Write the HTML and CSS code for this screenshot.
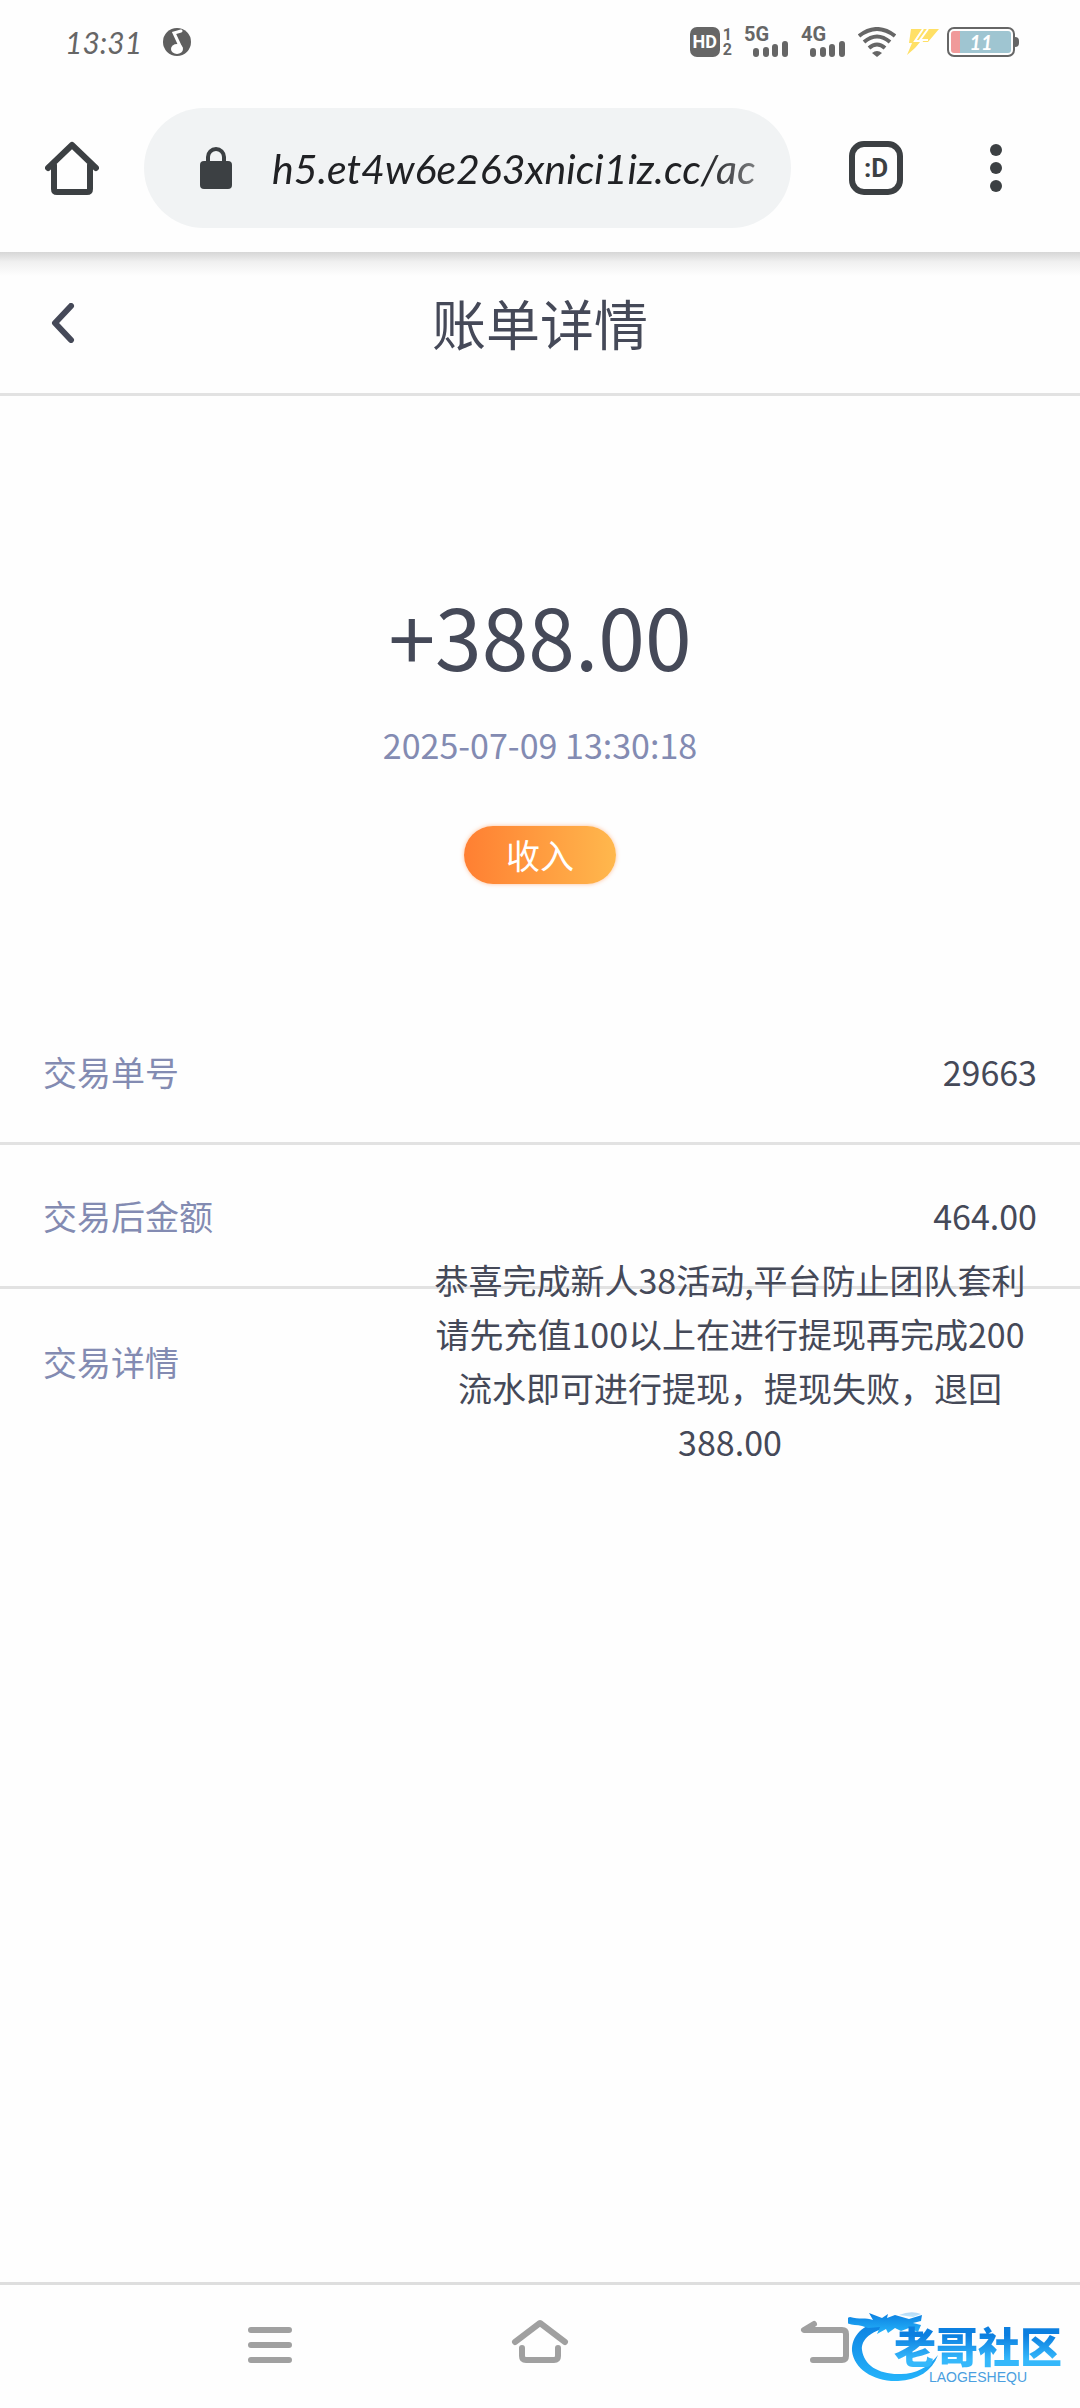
FILE: index.html
```html
<!DOCTYPE html>
<html lang="zh-CN">
<head>
    <meta charset="UTF-8">
    <meta name="viewport" content="width=device-width, initial-scale=1.0">
    <title>账单详情</title>
    <link rel="stylesheet" href="styles.css">
</head>
<body>
    <!-- Phone status bar -->
    <div class="status-bar">
        <div class="status-left">
            <span class="time">13:31</span>
            <svg width="28" height="28" viewBox="0 0 28 28">
                <circle cx="14" cy="14" r="14" fill="#5f5f5f"/>
                <path d="M18 3l-7 2 7 15" fill="none" stroke="#fff" stroke-width="3" stroke-linecap="round"/>
                <ellipse cx="14" cy="21" rx="6" ry="5" fill="#fff"/>
            </svg>
        </div>
        <div class="status-right">
            <div class="hd">
                <span class="hd-box">HD</span>
                <span class="hd-sims"><span>1</span><span>2</span></span>
            </div>
            <div class="signal">
                <span>5G</span>
                <svg width="36" height="16" viewBox="0 0 36 16">
                    <path d="M3 10v3M13 9v4M22 6v7M32 3v10" stroke="#666" stroke-width="6" stroke-linecap="round"/>
                </svg>
            </div>
            <div class="signal">
                <span>4G</span>
                <svg width="36" height="16" viewBox="0 0 36 16">
                    <path d="M3 10v3M13 9v4M22 6v7M32 3v10" stroke="#666" stroke-width="6" stroke-linecap="round"/>
                </svg>
            </div>
            <svg class="wifi" width="38" height="30" viewBox="0 0 38 30">
                <path d="M1 9Q19-5 37 9M6 15Q19 4 32 15M11 21Q19 14 27 21" fill="none" stroke="#666" stroke-width="4"/>
                <path d="M14 26q5-4 10 0l-5 4z" fill="#666"/>
            </svg>
            <svg class="bolt" width="34" height="28" viewBox="0 0 34 28">
                <path d="M5 1h28L22 14h-6L1 27l5-12H3z" fill="#ffe066"/>
                <path d="M17 1L9 13h7L8 23M22 1l-8 11h8" fill="none" stroke="#fff" stroke-width="2"/>
            </svg>
            <div class="battery"><span>11</span></div>
        </div>
    </div>

    <!-- Browser toolbar -->
    <div class="toolbar">
        <button class="icon-button" aria-label="主页">
            <svg width="54" height="54" viewBox="0 0 54 54">
                <path d="M9 24v24q0 3 3 3h30q3 0 3-3V24M3 27L27 4l24 23" fill="none" stroke="#3c4043" stroke-width="6" stroke-linecap="round" stroke-linejoin="round"/>
            </svg>
        </button>
        <div class="address">
            <svg width="32" height="42" viewBox="0 0 32 42">
                <rect y="14" width="32" height="28" rx="4" fill="#3c4043"/>
                <path d="M8 16v-6a8 8 0 0 1 16 0v6" fill="none" stroke="#3c4043" stroke-width="4"/>
            </svg>
            <input class="url" type="text" aria-label="网址" value="h5.et4w6e263xnici1iz.cc/ac">
        </div>
        <button class="tabs-button" aria-label="标签页">:D</button>
        <button class="icon-button" aria-label="菜单">
            <svg width="12" height="48" viewBox="0 0 12 48" fill="#3c4043">
                <circle cx="6" cy="6" r="6"/>
                <circle cx="6" cy="24" r="6"/>
                <circle cx="6" cy="42" r="6"/>
            </svg>
        </button>
    </div>

    <header class="header">
        <button class="icon-button" aria-label="返回">
            <svg width="24" height="40" viewBox="0 0 24 40">
                <path d="M20 3L4 20l16 17" fill="none" stroke="#454958" stroke-width="6" stroke-linecap="round" stroke-linejoin="round"/>
            </svg>
        </button>
        <h1>账单详情</h1>
    </header>

    <main>
        <div class="summary">
            <div class="amount">+388.00</div>
            <div class="date">2025-07-09 13:30:18</div>
            <div class="tag">收入</div>
        </div>

        <dl class="details">
            <div class="row">
                <dt>交易单号</dt>
                <dd>29663</dd>
            </div>
            <div class="row">
                <dt>交易后金额</dt>
                <dd>464.00</dd>
            </div>
            <div class="row">
                <dt>交易详情</dt>
                <dd class="note">恭喜完成新人38活动,平台防止团队套利请先充值100以上在进行提现再完成200流水即可进行提现，提现失败，退回388.00</dd>
            </div>
        </dl>
    </main>

    <!-- System navigation -->
    <nav class="nav-bar">
        <button class="icon-button" aria-label="最近任务">
            <svg width="80" height="60" viewBox="0 0 80 60">
                <path d="M21 13h38M21 28h38M21 43h38"/>
            </svg>
        </button>
        <button class="icon-button" aria-label="主屏幕">
            <svg width="80" height="60" viewBox="0 0 80 60">
                <path d="M15 25L40 6l25 19M22 31v8q0 4 4 4h28q4 0 4-4v-8"/>
            </svg>
        </button>
        <button class="icon-button" aria-label="返回上一页">
            <svg width="80" height="60" viewBox="0 0 80 60">
                <path d="M44 7l-10 6h38q4 0 4 4v22q0 4-4 4H43"/>
            </svg>
        </button>
        <div class="watermark">
            <svg width="92" height="80" viewBox="0 0 92 80">
                <defs>
                    <linearGradient id="dragon" x1="0" y1="0" x2="0" y2="1">
                        <stop offset="0" stop-color="#0c7fe0"/>
                        <stop offset="1" stop-color="#25b4fb"/>
                    </linearGradient>
                </defs>
                <g fill="url(#dragon)">
                    <path d="M37 16C14 18 3 32 4 46c2 18 22 31 46 30 20-1 34-10 40-26-10 13-24 20-40 19-20 0-34-9-36-24-1-11 10-19 24-22z"/>
                    <path d="M2 12c9 3 16 0 23 3l-4-7 13 5 6-4-1 4 8-3 14 4 13-4-1 6-8 2 8 2-3 7-9-4-8 3-6-3-7 5-2-4-9 5 3-7-12 1-6-2c-7-2-13 0-19-6z"/>
                    <path d="M51 10q12-5 22-1l-8 3z" opacity=".3"/>
                </g>
            </svg>
            <div class="watermark-text">
                <strong>老哥社区</strong>
                <small>LAOGESHEQU</small>
            </div>
        </div>
    </nav>
</body>
</html>
```
FILE: styles.css
```css
* {
    margin: 0;
    padding: 0;
    box-sizing: border-box;
}

body {
    display: flex;
    flex-direction: column;
    min-height: 100vh;
    background: #fefefe;
    color: #454958;
    font-family: 'Noto Sans CJK SC', sans-serif;
    font-size: 34px;
}

button {
    border: none;
    background: none;
    color: inherit;
    cursor: pointer;
}

svg {
    display: block;
    flex-shrink: 0;
}

.icon-button {
    display: flex;
    align-items: center;
    justify-content: center;
}

/* Status bar */
.status-bar {
    display: flex;
    justify-content: space-between;
    align-items: center;
    height: 84px;
    padding: 0 65px 0 65px;
    color: #666;
}

.status-left,
.status-right {
    display: flex;
    align-items: center;
}

.status-left {
    gap: 21px;
}

.time {
    font-family: Lato, sans-serif;
    font-size: 30px;
    font-style: italic;
}

.status-right {
    gap: 12px;
    font-family: Roboto, sans-serif;
    font-weight: bold;
}

.hd {
    display: flex;
    gap: 3px;
}

.hd-box {
    width: 30px;
    border-radius: 7px;
    background: #666;
    color: #fff;
    font-size: 18px;
    line-height: 30px;
    text-align: center;
}

.hd-sims {
    display: flex;
    flex-direction: column;
    font-size: 16px;
    line-height: 15px;
}

.signal {
    display: flex;
    flex-direction: column;
    width: 45px;
    font-size: 20px;
    line-height: 14px;
}

.signal svg {
    align-self: flex-end;
}

.bolt {
    margin: 0 -5px 0 -2px;
}

.battery {
    position: relative;
    width: 68px;
    height: 30px;
    padding: 2px;
    border: 2px solid #666;
    border-radius: 7px;
    background: linear-gradient(90deg, #f09a9a 9px, #9fc5d1 9px) content-box;
    color: #fff;
    font-family: Lato, sans-serif;
    font-size: 20px;
    font-style: italic;
    line-height: 22px;
    text-align: center;
}

.battery::after {
    content: '';
    position: absolute;
    top: 8px;
    right: -6px;
    width: 4px;
    height: 10px;
    border-radius: 0 4px 4px 0;
    background: #666;
}

/* Browser toolbar */
.toolbar {
    display: flex;
    align-items: center;
    height: 168px;
    padding: 0 78px 0 45px;
}

.address {
    display: flex;
    flex: 1;
    align-items: center;
    gap: 40px;
    min-width: 0;
    height: 120px;
    margin: 0 58px 0 45px;
    padding: 0 28px 0 56px;
    border-radius: 60px;
    background: #f1f3f4;
}

.url {
    flex: 1;
    min-width: 0;
    border: none;
    outline: none;
    background: none;
    color: #202124;
    font-family: Lato, sans-serif;
    font-size: 41px;
    font-style: italic;
    -webkit-mask-image: linear-gradient(90deg, #000 88%, rgba(0, 0, 0, 0.5));
    mask-image: linear-gradient(90deg, #000 88%, rgba(0, 0, 0, 0.5));
}

.tabs-button {
    width: 54px;
    height: 54px;
    margin-right: 87px;
    border: 6px solid #3c4043;
    border-radius: 15px;
    color: #3c4043;
    font-family: Roboto, sans-serif;
    font-size: 26px;
    font-weight: bold;
}

/* Page header, shaded by the toolbar above it */
.header {
    display: grid;
    grid-template-columns: 1fr auto 1fr;
    align-items: center;
    height: 144px;
    padding: 0 51px;
    border-bottom: 3px solid #e2e2e2;
    background: linear-gradient(#d6d6d6, #f0f0f0 10px, #fefefe 24px);
}

.header .icon-button {
    justify-self: start;
}

h1 {
    font-size: 54px;
    font-weight: normal;
    line-height: 80px;
}

main {
    flex: 1;
}

.summary {
    display: flex;
    flex-direction: column;
    align-items: center;
    padding: 179px 0 117px;
}

.amount {
    font-size: 84px;
    line-height: 120px;
}

.date {
    margin: 26px 0 57px;
    color: #838bb2;
    line-height: 48px;
}

.tag {
    width: 152px;
    border-radius: 29px;
    background: linear-gradient(90deg, #ff7f32, #ffb84d);
    box-shadow: 0 0 4px rgba(255, 127, 50, 0.5);
    color: #fff;
    line-height: 58px;
    text-align: center;
}

/* Bill rows */
.row {
    display: flex;
    justify-content: space-between;
    align-items: center;
    height: 144px;
    padding: 0 43px;
    border-bottom: 3px solid #e2e2e2;
}

.row:last-child {
    border-bottom: none;
}

dt {
    color: #838bb2;
}

.note {
    width: 614px;
    line-height: 54px;
    text-align: center;
}

/* System navigation */
.nav-bar {
    position: relative;
    display: grid;
    grid-template-columns: repeat(3, 1fr);
    height: 126px;
    padding: 0 12.5%;
    border-top: 3px solid #dedede;
}

.nav-bar .icon-button path {
    fill: none;
    stroke: #a0a0a0;
    stroke-width: 6;
    stroke-linecap: round;
    stroke-linejoin: round;
}

.watermark {
    position: absolute;
    right: 18px;
    bottom: 23px;
    display: flex;
    align-items: flex-end;
}

.watermark-text {
    display: flex;
    flex-direction: column;
    align-items: center;
    margin-left: -46px;
}

.watermark strong {
    background: linear-gradient(#0c7fe0 30%, #35b8fb 80%);
    -webkit-background-clip: text;
    background-clip: text;
    color: transparent;
    font-size: 42px;
    font-weight: 900;
    line-height: 48px;
}

.watermark small {
    color: #4a9fe0;
    font-family: 'Liberation Sans', sans-serif;
    font-size: 14px;
    line-height: 16px;
}
```
